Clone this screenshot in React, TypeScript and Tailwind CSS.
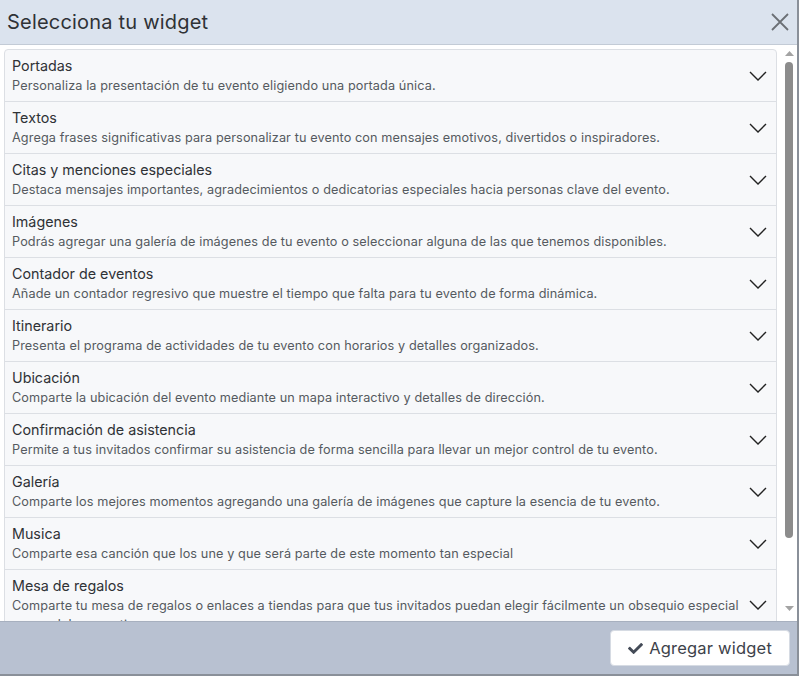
import { FaCheck } from 'react-icons/fa';

const widgets = [
  { title: 'Portadas', desc: 'Personaliza la presentación de tu evento eligiendo una portada única.' },
  { title: 'Textos', desc: 'Agrega frases significativas para personalizar tu evento con mensajes emotivos, divertidos o inspiradores.' },
  { title: 'Citas y menciones especiales', desc: 'Destaca mensajes importantes, agradecimientos o dedicatorias especiales hacia personas clave del evento.' },
  { title: 'Imágenes', desc: 'Podrás agregar una galería de imágenes de tu evento o seleccionar alguna de las que tenemos disponibles.' },
  { title: 'Contador de eventos', desc: 'Añade un contador regresivo que muestre el tiempo que falta para tu evento de forma dinámica.' },
  { title: 'Itinerario', desc: 'Presenta el programa de actividades de tu evento con horarios y detalles organizados.' },
  { title: 'Ubicación', desc: 'Comparte la ubicación del evento mediante un mapa interactivo y detalles de dirección.' },
  { title: 'Confirmación de asistencia', desc: 'Permite a tus invitados confirmar su asistencia de forma sencilla para llevar un mejor control de tu evento.' },
  { title: 'Galería', desc: 'Comparte los mejores momentos agregando una galería de imágenes que capture la esencia de tu evento.' },
  { title: 'Musica', desc: 'Comparte esa canción que los une y que será parte de este momento tan especial' },
  { title: 'Mesa de regalos', desc: 'Comparte tu mesa de regalos o enlaces a tiendas para que tus invitados puedan elegir fácilmente un obsequio especial para celebrar contigo.' },
];

function Chevron() {
  return (
    <svg width="18" height="10" viewBox="0 0 18 10" className="shrink-0">
      <polyline points="1,1 9,9 17,1" fill="none" stroke="#222" strokeWidth="1.4" />
    </svg>
  );
}

// fake classic scrollbar, the headless browser hides the native one
function Scrollbar() {
  return (
    <div className="w-[16px] shrink-0 flex flex-col items-center bg-white pt-[6px] pb-[10px]">
      <svg width="9" height="5" viewBox="0 0 9 5">
        <polygon points="0,5 4.5,0 9,5" fill="#a3a3a3" />
      </svg>
      <div className="mt-[6px] w-[8px] h-[476px] rounded-[4px] bg-[#8c8c8c]" />
      <div className="flex-1" />
      <svg width="9" height="5" viewBox="0 0 9 5">
        <polygon points="0,0 4.5,5 9,0" fill="#a3a3a3" />
      </svg>
    </div>
  );
}

export default function App() {
  return (
    <div
      className="h-[676px] w-[799px] flex flex-col bg-white border-r-2 border-b-2 border-[#8a9099] overflow-hidden"
      style={{ fontFamily: 'Inter, "Open Sans", sans-serif' }}
    >
      <div className="h-[45px] shrink-0 flex items-center justify-between pl-[7px] pr-[8px] bg-[#dbe3ee] border-b border-[#c3cbd6]">
        <h2 className="text-[20px] text-[#2f3236] font-normal tracking-[0.2px]">Selecciona tu widget</h2>
        <svg width="18" height="18" viewBox="0 0 18 18">
          <path d="M1 1L17 17M17 1L1 17" stroke="#6b6f75" strokeWidth="1.8" />
        </svg>
      </div>

      <div className="flex-1 min-h-0 flex">
        <div className="flex-1 min-w-0 overflow-hidden pl-[4px] pr-[4px] pt-[4px] bg-white">
          <div className="border border-[#dcdfe4] rounded-t-[4px] bg-[#f7f8fa]">
            {widgets.map((w) => (
              <div
                key={w.title}
                className="flex items-center gap-[5px] pl-[7px] pr-[9px] py-[6px] border-b border-[#dcdfe4] last:border-b-0"
              >
                <div className="flex-1 min-w-0">
                  <div className="text-[14.3px] leading-[20px] text-[#2f3236]">{w.title}</div>
                  <div className="text-[12.7px] leading-[19px] text-[#555a60] tracking-[0.1px]">{w.desc}</div>
                </div>
                <Chevron />
              </div>
            ))}
          </div>
        </div>
        <Scrollbar />
      </div>

      <div className="h-[53px] shrink-0 flex items-center justify-end pr-[7px] bg-[#b8c1d1] border-t border-[#a7b0bf]">
        <button className="h-[36px] px-[17px] flex items-center gap-[6px] bg-white rounded-[4px] border border-[#d6dbe3] text-[16.5px] text-[#3d424a] tracking-[0.2px]">
          <FaCheck className="w-[15px] h-[15px] text-[#444b57]" />
          Agregar widget
        </button>
      </div>
    </div>
  );
}
